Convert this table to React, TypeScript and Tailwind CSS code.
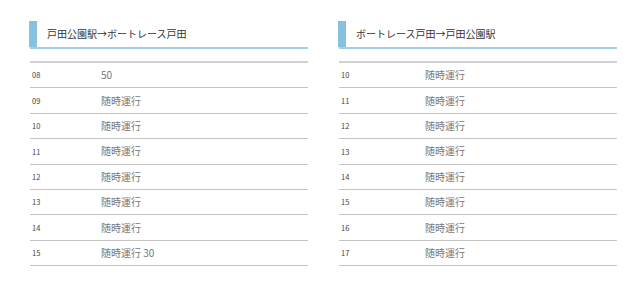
import React from "react";

type Row = [string, string];

const left: Row[] = [
  ["08", "50"],
  ["09", "随時運行"],
  ["10", "随時運行"],
  ["11", "随時運行"],
  ["12", "随時運行"],
  ["13", "随時運行"],
  ["14", "随時運行"],
  ["15", "随時運行 30"],
];

const right: Row[] = [
  ["10", "随時運行"],
  ["11", "随時運行"],
  ["12", "随時運行"],
  ["13", "随時運行"],
  ["14", "随時運行"],
  ["15", "随時運行"],
  ["16", "随時運行"],
  ["17", "随時運行"],
];

function Panel({ title, rows, col1 }: { title: string; rows: Row[]; col1: string }) {
  return (
    <div className="w-[278px] flex flex-col">
      <div className="flex h-[28px] border-b-2 border-[#9fd0e8]">
        <div className="w-[8px] bg-[#86c2df] -ml-[1px]" />
        <div className="flex items-center pl-[10px] text-[10px] text-[#333] leading-none">{title}</div>
      </div>
      <div className="mt-[12px] border-t-2 border-[#d2d2d2]">
        {rows.map(([h, m], i) => (
          <div key={i} className="flex items-center h-[25.4px] border-b border-[#c4c4c4]">
            <div className={`${col1} pl-[2px] text-[7.5px] text-[#444] leading-none`}>{h}</div>
            <div className="text-[10px] text-[#777] leading-none">{m}</div>
          </div>
        ))}
      </div>
    </div>
  );
}

export default function App() {
  return (
    <div
      className="w-[640px] h-[282px] bg-white flex gap-[31px] pl-[30px] pt-[21px]"
      style={{ fontFamily: '"Noto Sans CJK JP", "Noto Sans", sans-serif' }}
    >
      <Panel title="戸田公園駅→ボートレース戸田" rows={left} col1="w-[71px]" />
      <Panel title="ボートレース戸田→戸田公園駅" rows={right} col1="w-[86px]" />
    </div>
  );
}
